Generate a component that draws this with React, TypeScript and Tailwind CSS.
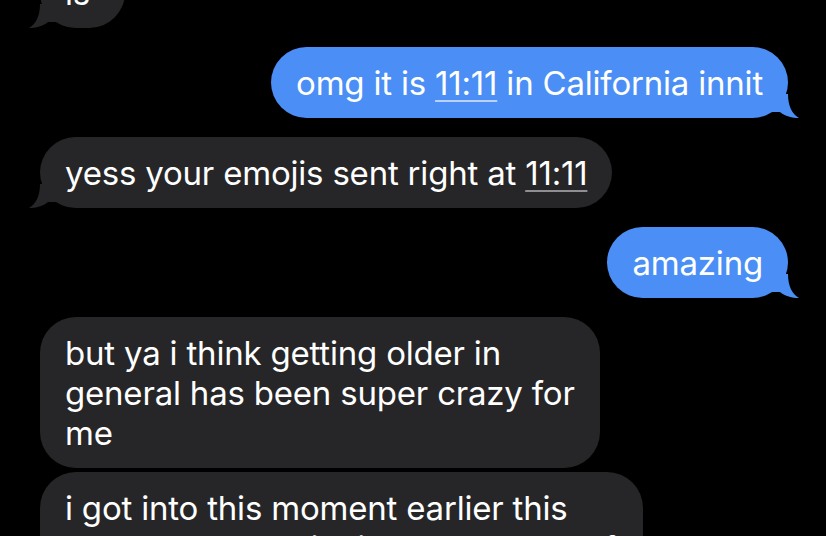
import React from 'react'

type Side = 'in' | 'out'

function Tail({ side }: { side: Side }) {
  const fill = side === 'out' ? '#4b8ff6' : '#262628'
  return (
    <svg
      width="34"
      height="24"
      viewBox="0 0 34 24"
      className={
        side === 'out'
          ? 'absolute bottom-0 right-[-14px]'
          : 'absolute bottom-0 left-[-14px] -scale-x-100'
      }
    >
      <path d="M0 0 L20 0 C20 12 24 20 31 24 C24 24 17 22 12 18 L0 18 Z" fill={fill} />
    </svg>
  )
}

function Bubble({
  side,
  tail = true,
  className = '',
  children,
}: {
  side: Side
  tail?: boolean
  className?: string
  children: React.ReactNode
}) {
  return (
    <div
      className={
        'relative rounded-[36px] px-[25px] py-[15.5px] text-[33px] leading-[40px] text-white tracking-[-0.2px] ' +
        (side === 'out' ? 'self-end bg-[#4b8ff6] ' : 'self-start bg-[#262628] ') +
        className
      }
    >
      {children}
      {tail && <Tail side={side} />}
    </div>
  )
}

function Time({ side }: { side: Side }) {
  return (
    <span
      className={
        'underline underline-offset-[5px] decoration-[1.5px] ' +
        (side === 'out' ? 'decoration-[#b9d2fb]' : 'decoration-[#8e8e93]')
      }
    >
      11:11
    </span>
  )
}

export default function App() {
  return (
    <div
      className="h-[536px] w-[826px] overflow-hidden bg-black"
      style={{ fontFamily: 'Inter, "Noto Sans", sans-serif' }}
    >
      <div className="flex flex-col pl-[40px] pr-[38px]">
        {/* cut-off bubble at the top */}
        <Bubble side="in" className="-mt-[43px] min-w-[85px]">
          is
        </Bubble>

        <Bubble side="out" className="mt-[19px]">
          omg it is <Time side="out" /> in California innit
        </Bubble>

        <Bubble side="in" className="mt-[19px]">
          yess your emojis sent right at <Time side="in" />
        </Bubble>

        <Bubble side="out" className="mt-[19px]">
          amazing
        </Bubble>

        <Bubble side="in" tail={false} className="mt-[19px]">
          but ya i think getting older in
          <br />
          general has been super crazy for
          <br />
          me
        </Bubble>

        <Bubble side="in" className="mt-[4px] w-[603px] whitespace-nowrap">
          i got into this moment earlier this
          <br />
          semester when it hit me that a lot of
          <br />
          the people around me were growing
        </Bubble>
      </div>
    </div>
  )
}
